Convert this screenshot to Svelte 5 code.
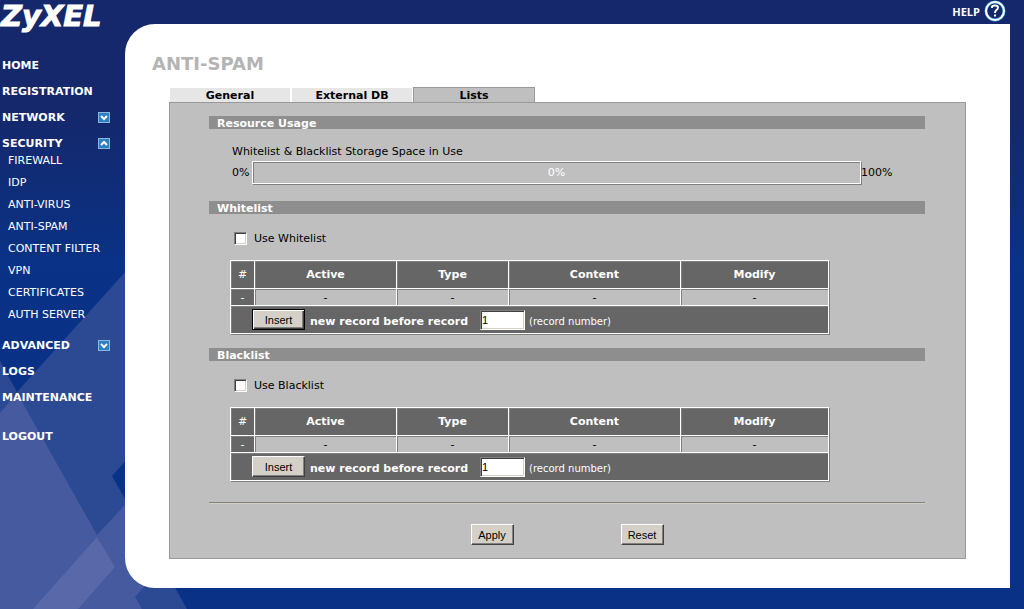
<script lang="ts">
    type MenuItem = {
        name: string;
        toggle?: 'open' | 'closed';
        children?: string[];
        apart?: boolean;
    };

    const menu: MenuItem[] = [
        { name: 'HOME' },
        { name: 'REGISTRATION' },
        { name: 'NETWORK', toggle: 'closed' },
        {
            name: 'SECURITY',
            toggle: 'open',
            children: [
                'FIREWALL',
                'IDP',
                'ANTI-VIRUS',
                'ANTI-SPAM',
                'CONTENT FILTER',
                'VPN',
                'CERTIFICATES',
                'AUTH SERVER'
            ]
        },
        { name: 'ADVANCED', toggle: 'closed' },
        { name: 'LOGS' },
        { name: 'MAINTENANCE' },
        { name: 'LOGOUT', apart: true }
    ];

    const tabs = ['General', 'External DB', 'Lists'];
    const columns = ['Active', 'Type', 'Content', 'Modify'];

    let activeTab = $state('Lists');
    let usage = $state(0);
    let lists = $state([
        { name: 'Whitelist', enabled: false, record: '1', isDefault: true },
        { name: 'Blacklist', enabled: false, record: '1', isDefault: false }
    ]);

    function reset() {
        for (const list of lists) {
            list.enabled = false;
            list.record = '1';
        }
    }
</script>

<div class="page">
    <svg class="backdrop" width="200" height="349" viewBox="0 260 200 349" aria-hidden="true">
        <path fill="#2c4994" d="M136 260 17 392 0 361V609H187L112 476 136 449Z" />
        <path fill="#465aa0" d="M17 393 97 535 135 494 160 569 135 597 142 609H0V413Z" />
        <path fill="#5868a8" d="M97 537 115 567 78 609H33Z" />
    </svg>

    <header>
        <svg class="logo" width="110" height="36" viewBox="0 0 110 36" role="img" aria-label="ZyXEL">
            <text x="1" y="26">ZyXEL</text>
        </svg>
        <a class="help" href="#help">
            <span>HELP</span>
            <svg width="22" height="22" viewBox="0 0 22 22" aria-hidden="true">
                <circle cx="11" cy="11" r="9" fill="#15286b" stroke="#3d9be0" stroke-width="3" />
                <circle cx="11" cy="11" r="9" fill="none" stroke="#fff" stroke-width="2" />
                <path d="M8 8V7Q8 5.500 11 5.500T14 7.500Q14 9 12.500 10T11 13M11 14.500V16.500" fill="none" stroke="#fff" stroke-width="2" />
            </svg>
        </a>
    </header>

    <nav>
        {#each menu as item}
            <div class="menu-item" class:apart={item.apart}>
                <a href="#{item.name.toLowerCase()}">{item.name}</a>
                {#if item.toggle}
                    <button class="toggle" aria-label="Toggle {item.name}">
                        <svg width="12" height="11" viewBox="0 0 12 11">
                            <rect x="0.500" y="0.500" width="11" height="10" fill="#2b7fc2" stroke="#8bb7d8" />
                            <path
                                d={item.toggle === 'open' ? 'M3 7 6 4 9 7' : 'M3 4 6 7 9 4'}
                                fill="none"
                                stroke="#fff"
                                stroke-width="2"
                            />
                        </svg>
                    </button>
                {/if}
            </div>
            {#if item.children}
                <ul>
                    {#each item.children as child}
                        <li><a href="#{child.toLowerCase()}">{child}</a></li>
                    {/each}
                </ul>
            {/if}
        {/each}
    </nav>

    <main>
        <h1>ANTI-SPAM</h1>
        <div class="tabs">
            {#each tabs as tab}
                <button class:active={tab === activeTab} onclick={() => (activeTab = tab)}>{tab}</button>
            {/each}
        </div>

        <div class="panel">
            <h2>Resource Usage</h2>
            <div class="resource">
                <p>Whitelist &amp; Blacklist Storage Space in Use</p>
                <div class="meter-row">
                    <span class="min">0%</span>
                    <div class="meter">
                        <div class="fill" style="width: {usage}%"></div>
                        <span>{usage}%</span>
                    </div>
                    <span class="max">100%</span>
                </div>
            </div>

            {#each lists as list}
                <h2>{list.name}</h2>
                <section>
                    <label class="use">
                        <input type="checkbox" bind:checked={list.enabled} />
                        Use {list.name}
                    </label>
                    <table>
                        <colgroup>
                            <col class="c-index" />
                            <col class="c-active" />
                            <col class="c-type" />
                            <col class="c-content" />
                            <col class="c-modify" />
                        </colgroup>
                        <thead>
                            <tr>
                                <th class="index">#</th>
                                {#each columns as column}
                                    <th>{column}</th>
                                {/each}
                            </tr>
                        </thead>
                        <tbody>
                            <tr class="record">
                                <th class="index">-</th>
                                {#each columns as column}
                                    <td>-</td>
                                {/each}
                            </tr>
                            <tr class="insert">
                                <td colspan="5">
                                    <div class="insert-row">
                                        <button class="btn" class:default={list.isDefault}>Insert</button>
                                        <label for="record-{list.name}">new record before record</label>
                                        <input id="record-{list.name}" type="text" bind:value={list.record} />
                                        <small>(record number)</small>
                                    </div>
                                </td>
                            </tr>
                        </tbody>
                    </table>
                </section>
            {/each}

            <hr />
            <div class="actions">
                <button class="btn">Apply</button>
                <button class="btn" onclick={reset}>Reset</button>
            </div>
        </div>
    </main>
</div>

<style>
    :global(body) {
        background: #093287;
    }

    .page {
        position: relative;
        box-sizing: border-box;
        min-height: 100vh;
        display: grid;
        grid-template-columns: 125px 1fr;
        grid-template-rows: 24px auto;
        align-items: start;
        padding: 0 14px 21px 0;
        background: #093287 linear-gradient(#15286b 0, #15286b 110px, #093287 270px) no-repeat;
        font-family: "DejaVu Sans", Verdana, sans-serif;
        font-size: 11px;
        color: #000;
    }

    .backdrop {
        position: absolute;
        left: 0;
        bottom: 0;
    }

    header {
        position: relative;
        grid-column: 1 / -1;
        display: flex;
        justify-content: space-between;
        align-items: flex-start;
        height: 24px;
    }

    .logo text {
        font: italic bold 29px "DejaVu Sans", Verdana, sans-serif;
        fill: #fff;
        stroke: #fff;
        stroke-width: 1px;
    }

    .help {
        display: flex;
        align-items: center;
        gap: 4px;
        margin-right: 4px;
        color: #fff;
        font: bold 11px "Open Sans", sans-serif;
        text-decoration: none;
    }

    nav {
        position: relative;
        padding-top: 28px;
        color: #fff;
    }

    nav a {
        color: #fff;
        text-decoration: none;
    }

    .menu-item {
        display: flex;
        justify-content: space-between;
        align-items: center;
        height: 26px;
        padding: 0 15px 0 2px;
        font-weight: bold;
    }

    .apart {
        margin-top: 13px;
    }

    .toggle {
        display: block;
        padding: 0;
        border: 0;
        background: none;
    }

    .toggle svg {
        display: block;
    }

    ul {
        list-style: none;
        margin: -6px 0 6px;
        padding: 0 0 0 8px;
    }

    li {
        line-height: 22px;
    }

    main {
        position: relative;
        box-sizing: border-box;
        min-height: 564px;
        padding: 30px 44px 29px 44px;
        background: #fff;
        border-radius: 30px 0 0 30px;
    }

    h1 {
        margin: 0 0 13px -17px;
        font-size: 18px;
        line-height: 20px;
        color: #b4b4b4;
    }

    .tabs {
        display: flex;
        align-items: flex-end;
    }

    .tabs button {
        width: 122px;
        height: 15px;
        padding: 1px 0 0;
        border: 1px solid #fff;
        border-bottom-width: 0;
        background: #e6e6e6;
        font: bold 11px/13px "DejaVu Sans", Verdana, sans-serif;
    }

    .tabs button.active {
        border-color: #999;
        background: #bfbfbf;
    }

    .panel {
        padding: 13px 40px 13px 39px;
        border: 1px solid #999;
        background: #bfbfbf;
    }

    h2 {
        margin: 0;
        padding-left: 8px;
        height: 13px;
        font-size: 11px;
        line-height: 15px;
        background: #8e8e8e;
        color: #fff;
    }

    .resource {
        padding: 15px 31px 17px 23px;
    }

    .resource p {
        margin: 0 0 2px;
        line-height: 15px;
    }

    .meter-row {
        display: flex;
        align-items: center;
        line-height: 21px;
    }

    .min {
        width: 20px;
    }

    .max {
        width: 33px;
    }

    .meter {
        position: relative;
        flex: 1;
        height: 21px;
        border: 1px solid #fff;
        box-shadow: inset 1px 1px #808080, 1px 1px #808080;
        text-align: center;
        color: #fff;
    }

    .fill {
        position: absolute;
        top: 0;
        bottom: 0;
        left: 0;
        background: #666;
    }

    .meter span {
        position: relative;
    }

    section {
        padding: 17px 96px 14px 21px;
    }

    .use {
        display: flex;
        align-items: center;
        gap: 7px;
        padding-left: 4px;
        margin-bottom: 14px;
        line-height: 15px;
    }

    .use input {
        appearance: none;
        width: 13px;
        height: 13px;
        margin: 0;
        border: 1px solid;
        border-color: #808080 #fff #fff #808080;
        background: #fff;
        box-shadow: inset 1px 1px #404040, inset -1px -1px #d4d0c8;
    }

    .use input:checked {
        background: #404040;
    }

    table {
        width: 100%;
        table-layout: fixed;
        border-collapse: collapse;
        box-shadow: 1px 1px #808080;
    }

    .c-index {
        width: 24px;
    }

    .c-active {
        width: 142px;
    }

    .c-type {
        width: 112px;
    }

    .c-content {
        width: 172px;
    }

    th,
    td {
        padding: 0;
        border: 1px solid #fff;
        box-shadow: inset 1px 1px #808080;
        text-align: center;
    }

    th {
        height: 27px;
        background: #666;
        color: #fff;
    }

    .index {
        font-weight: normal;
    }

    .record th,
    .record td {
        height: 16px;
    }

    .insert td {
        height: 27px;
        background: #666;
    }

    .insert-row {
        display: flex;
        align-items: center;
        height: 27px;
        padding-left: 21px;
        color: #fff;
    }

    .insert-row label {
        margin: 4px 12px 0 5px;
        font-weight: bold;
    }

    .insert-row input {
        box-sizing: border-box;
        width: 45px;
        height: 20px;
        padding: 0 1px;
        border: 1px solid;
        border-color: #808080 #fff #fff #808080;
        box-shadow: inset 1px 1px #404040, inset -1px -1px #d4d0c8;
        font: 11px "Liberation Sans", Arial, sans-serif;
    }

    .insert-row small {
        margin: 4px 0 0 4px;
        font-size: 10px;
    }

    .btn {
        height: 21px;
        min-width: 43px;
        padding: 0;
        border: 1px solid;
        border-color: #fff #404040 #404040 #fff;
        box-shadow: inset -1px -1px #808080;
        background: #d4d0c8;
        font: 11px "Liberation Sans", Arial, sans-serif;
        color: #000;
    }

    .insert-row .btn {
        width: 53px;
    }

    .btn.default {
        border-color: #000;
        box-shadow: inset 1px 1px #fff, inset -1px -1px #404040, inset -2px -2px #808080;
    }

    hr {
        margin: 7px 0 20px;
        border: 0;
        border-top: 1px solid #808080;
        border-bottom: 1px solid #d4d0c8;
    }

    .actions {
        display: flex;
        justify-content: center;
        gap: 107px;
    }
</style>
